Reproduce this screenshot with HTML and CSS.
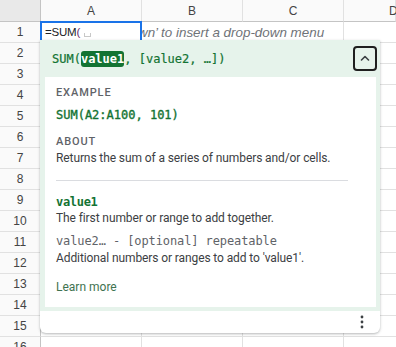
FILE: index.html
```html
<!DOCTYPE html>
<html>
<head>
<meta charset="utf-8">
<link rel="stylesheet" href="styles.css">
</head>
<body>
<div class="sheet">
  <div class="corner"></div>
  <div class="ch">A</div><div class="ch">B</div><div class="ch">C</div><div class="ch last">D</div>

  <div class="rn">1</div>
  <div class="cell a1"><span class="fx">=SUM<span class="paren">(</span></span><span class="slot"></span></div>
  <div class="cell hint"><span>wn’ to insert a drop-down menu</span></div>
  <div class="cell last"></div>

  <div class="rn">2</div><div class="cell"></div><div class="cell"></div><div class="cell"></div><div class="cell last"></div>
  <div class="rn">3</div><div class="cell"></div><div class="cell"></div><div class="cell"></div><div class="cell last"></div>
  <div class="rn">4</div><div class="cell"></div><div class="cell"></div><div class="cell"></div><div class="cell last"></div>
  <div class="rn">5</div><div class="cell"></div><div class="cell"></div><div class="cell"></div><div class="cell last"></div>
  <div class="rn">6</div><div class="cell"></div><div class="cell"></div><div class="cell"></div><div class="cell last"></div>
  <div class="rn">7</div><div class="cell"></div><div class="cell"></div><div class="cell"></div><div class="cell last"></div>
  <div class="rn">8</div><div class="cell"></div><div class="cell"></div><div class="cell"></div><div class="cell last"></div>
  <div class="rn">9</div><div class="cell"></div><div class="cell"></div><div class="cell"></div><div class="cell last"></div>
  <div class="rn">10</div><div class="cell"></div><div class="cell"></div><div class="cell"></div><div class="cell last"></div>
  <div class="rn">11</div><div class="cell"></div><div class="cell"></div><div class="cell"></div><div class="cell last"></div>
  <div class="rn">12</div><div class="cell"></div><div class="cell"></div><div class="cell"></div><div class="cell last"></div>
  <div class="rn">13</div><div class="cell"></div><div class="cell"></div><div class="cell"></div><div class="cell last"></div>
  <div class="rn">14</div><div class="cell"></div><div class="cell"></div><div class="cell"></div><div class="cell last"></div>
  <div class="rn">15</div><div class="cell"></div><div class="cell"></div><div class="cell"></div><div class="cell last"></div>
  <div class="rn">16</div><div class="cell"></div><div class="cell"></div><div class="cell"></div><div class="cell last"></div>
</div>

<div class="popup">
  <div class="popup-main">
    <div class="sig-row">
      <div class="sig">SUM(<span class="arg">value1</span>, [value2, …])</div>
      <button class="collapse" aria-label="Collapse">
        <svg width="10" height="6" viewBox="0 0 10 6"><polyline points="1.5,5 5,1.5 8.5,5" fill="none" stroke="#3c4043" stroke-width="1.6" stroke-linecap="round" stroke-linejoin="round"/></svg>
      </button>
    </div>
    <div class="card">
      <div class="label">EXAMPLE</div>
      <div class="code example">SUM(A2:A100, 101)</div>
      <div class="label about">ABOUT</div>
      <div class="text">Returns the sum of a series of numbers and/or cells.</div>
      <div class="sep"></div>
      <div class="code param">value1</div>
      <div class="text">The first number or range to add together.</div>
      <div class="code param2">value2… - [optional] repeatable</div>
      <div class="text">Additional numbers or ranges to add to 'value1'.</div>
      <div class="link">Learn more</div>
    </div>
  </div>
  <div class="popup-footer">
    <svg class="kebab" width="4" height="14" viewBox="0 0 4 14"><circle cx="2" cy="2" r="1.4" fill="#3c4043"/><circle cx="2" cy="7" r="1.4" fill="#3c4043"/><circle cx="2" cy="12" r="1.4" fill="#3c4043"/></svg>
  </div>
</div>
</body>
</html>
```

FILE: styles.css
```css
html, body {
  margin: 0;
  padding: 0;
  background: #fff;
  overflow: hidden;
}

body {
  width: 396px;
  height: 347px;
  position: relative;
  font-family: "Liberation Sans", Arial, sans-serif;
}

.sheet {
  display: grid;
  grid-template-columns: 41px 101px 101px 101px 52px;
  grid-template-rows: 22px;
  grid-auto-rows: 21px;
}

.sheet > div {
  box-sizing: border-box;
  border-right: 1px solid #e1e1e1;
  border-bottom: 1px solid #e1e1e1;
}

.corner {
  background: #e9e9e9;
  border-right: 1px solid #c4c4c4 !important;
  border-bottom: 1px solid #c4c4c4 !important;
}

.ch {
  background: #fafafa;
  border-bottom: 1px solid #c4c4c4 !important;
  color: #444;
  font-size: 12px;
  display: flex;
  align-items: center;
  justify-content: center;
  padding-top: 1px;
}

.ch.last {
  justify-content: flex-start;
  padding-left: 45px;
}

.rn {
  background: #fafafa;
  border-right: 1px solid #c4c4c4 !important;
  color: #444;
  font-size: 12px;
  display: flex;
  align-items: center;
  justify-content: center;
}

.cell {
  background: #fff;
}

.cell.last {
  border-right: none !important;
}

.a1 {
  position: relative;
  z-index: 1;
  margin: -1px 0 0 -1px;
  border: 2px solid #1a73e8 !important;
  display: flex;
  align-items: center;
  padding-left: 3px;
  font-size: 11.5px;
  color: #202124;
  background: #fff;
}

.fx {
  letter-spacing: -0.2px;
}

.paren {
  color: #6b2b6b;
}

.slot {
  display: inline-block;
  width: 5px;
  height: 3px;
  margin: 6px 0 0 4px;
  border: 1px solid #c8c8c8;
  border-top: none;
}

.hint {
  grid-column: span 2;
  display: flex;
  align-items: center;
  overflow: hidden;
  white-space: nowrap;
}

.hint span {
  margin-left: -4px;
  font-style: italic;
  font-size: 13.4px;
  color: #6f7378;
}

.popup {
  position: absolute;
  left: 40px;
  top: 40px;
  width: 340px;
  z-index: 5;
  background: #fff;
  border-radius: 0 0 6px 6px;
  box-shadow: 0 1px 3px rgba(60, 64, 67, 0.28), 0 1px 2px rgba(60, 64, 67, 0.12);
  font-family: Roboto, "Liberation Sans", sans-serif;
}

.popup-main {
  background: #e6f3eb;
  padding: 0 4px 4px 5px;
}

.sig-row {
  height: 37px;
  display: flex;
  align-items: center;
  justify-content: space-between;
  padding-left: 7px;
  margin-right: -1px;
}

.sig {
  font-family: "DejaVu Sans Mono", "Liberation Mono", monospace;
  font-size: 12px;
  color: #137333;
  line-height: 16px;
  padding-top: 1px;
  -webkit-text-stroke: 0.2px #137333;
}

.arg {
  display: inline-block;
  background: #137333;
  color: #fff;
  font-weight: bold;
  border-radius: 3px;
  line-height: 16px;
  -webkit-text-stroke: 0;
}

.collapse {
  width: 24px;
  height: 25px;
  box-sizing: border-box;
  border: 2px solid #1f1f1f;
  border-radius: 4px;
  background: transparent;
  padding: 0;
  display: flex;
  align-items: center;
  justify-content: center;
  margin-top: -1px;
}

.card {
  background: #fff;
  padding: 8px 28px 12px 11px;
}

.label {
  font-size: 11px;
  font-weight: 500;
  letter-spacing: 0.9px;
  color: #5f6368;
  line-height: 16px;
}

.label.about {
  margin-top: 10px;
}

.code {
  font-family: "DejaVu Sans Mono", "Liberation Mono", monospace;
  font-size: 12px;
}

.example {
  color: #137333;
  line-height: 18px;
  margin-top: 5px;
  -webkit-text-stroke: 0.35px #137333;
}

.text {
  font-size: 12px;
  line-height: 16px;
  color: #3c4043;
  letter-spacing: -0.1px;
}

.sep {
  height: 1px;
  background: #dadce0;
  margin-top: 14px;
}

.param {
  color: #137333;
  font-weight: bold;
  line-height: 16px;
  margin-top: 13px;
  letter-spacing: -0.3px;
}

.param2 {
  color: #5f6368;
  line-height: 18px;
  margin-top: 6px;
  letter-spacing: -0.1px;
}

.link {
  margin-top: 13px;
  font-size: 12px;
  line-height: 16px;
  color: #3f7350;
}

.popup-footer {
  height: 22px;
  display: flex;
  align-items: center;
  justify-content: flex-end;
  padding-right: 16px;
}
```
